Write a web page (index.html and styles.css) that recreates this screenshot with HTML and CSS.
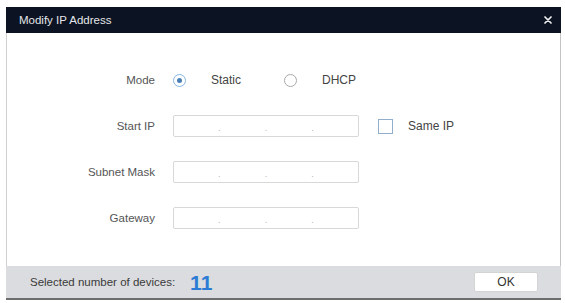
FILE: index.html
```
<!DOCTYPE html>
<html>
<head>
<meta charset="utf-8">
<link rel="stylesheet" href="styles.css">
</head>
<body>
<div class="dialog">
  <div class="titlebar">
    <span class="title">Modify IP Address</span>
    <svg class="close" width="8" height="8" viewBox="0 0 8 8"><path d="M1 1L7 7M7 1L1 7" stroke="#f0f0f0" stroke-width="1.7" stroke-linecap="round"/></svg>
  </div>
  <div class="content">
    <div class="form">
      <div class="label">Mode</div>
      <div class="ctrl">
        <span class="option"><span class="radio checked"></span><span class="opt-text">Static</span></span>
        <span class="option"><span class="radio"></span><span class="opt-text">DHCP</span></span>
      </div>
      <div class="label">Start IP</div>
      <div class="ctrl">
        <div class="ip"><span class="seg"></span><span class="dot">.</span><span class="seg"></span><span class="dot">.</span><span class="seg"></span><span class="dot">.</span><span class="seg"></span></div>
        <span class="check"></span><span class="opt-text same">Same IP</span>
      </div>
      <div class="label">Subnet Mask</div>
      <div class="ctrl">
        <div class="ip"><span class="seg"></span><span class="dot">.</span><span class="seg"></span><span class="dot">.</span><span class="seg"></span><span class="dot">.</span><span class="seg"></span></div>
      </div>
      <div class="label">Gateway</div>
      <div class="ctrl">
        <div class="ip"><span class="seg"></span><span class="dot">.</span><span class="seg"></span><span class="dot">.</span><span class="seg"></span><span class="dot">.</span><span class="seg"></span></div>
      </div>
    </div>
  </div>
  <div class="footer">
    <span class="count-label">Selected number of devices:</span>
    <span class="count">11</span>
    <button class="ok">OK</button>
  </div>
</div>
</body>
</html>
```

FILE: styles.css
```
html, body {
  margin: 0;
  padding: 0;
  background: #ffffff;
}
body {
  padding: 7px 0 0 6px;
  font-family: "Liberation Sans", Arial, sans-serif;
}
.dialog {
  width: 555px;
  box-sizing: border-box;
  border-left: 1px solid #d0d0d0;
  border-right: 1px solid #c4c4c4;
  background: #ffffff;
}
.titlebar {
  height: 26px;
  background: #0c1322;
  display: flex;
  align-items: center;
  justify-content: space-between;
  padding: 0 9px 0 13px;
  margin: 0 -1px;
}
.title {
  color: #e4e6ea;
  font-size: 11.5px;
}
.close {
  display: block;
}
.content {
  padding: 36px 0 37px 0;
}
.form {
  display: grid;
  grid-template-columns: 148px auto;
  grid-auto-rows: 22px;
  column-gap: 18px;
  row-gap: 24px;
}
.label {
  text-align: right;
  font-size: 11.5px;
  color: #555555;
  align-self: center;
}
.ctrl {
  display: flex;
  align-items: center;
}
.option {
  display: flex;
  align-items: center;
  gap: 25px;
  margin-right: 43px;
}
.radio {
  width: 13px;
  height: 13px;
  box-sizing: border-box;
  border-radius: 50%;
  border: 1px solid #a9a9a9;
  display: flex;
  align-items: center;
  justify-content: center;
}
.radio.checked {
  border-color: #86b6e4;
}
.radio.checked::after {
  content: "";
  width: 5px;
  height: 5px;
  border-radius: 50%;
  background: #4a7fb5;
}
.opt-text {
  font-size: 12px;
  color: #444444;
}
.ip {
  width: 186px;
  height: 22px;
  box-sizing: border-box;
  border: 1px solid #d8d8d8;
  border-radius: 2px;
  display: flex;
  align-items: center;
}
.seg {
  flex: 1;
}
.dot {
  font-size: 9px;
  color: #b0b0b0;
  line-height: 1;
  padding-top: 4px;
}
.check {
  width: 15px;
  height: 15px;
  box-sizing: border-box;
  border: 1px solid #93aecb;
  margin-left: 19px;
  margin-right: 15px;
}
.footer {
  height: 34px;
  box-sizing: border-box;
  background: #dadcdf;
  border-bottom: 2px solid #6e6e6e;
  display: flex;
  align-items: center;
  padding: 0 23px 0 24px;
  margin: 0 -1px;
}
.count-label {
  font-size: 11.5px;
  color: #3a3a3a;
}
.count {
  font-size: 21px;
  font-weight: bold;
  color: #2c7bd4;
  margin-left: 15px;
  margin-top: 1px;
}
.ok {
  margin-left: auto;
  width: 64px;
  height: 20px;
  background: #ffffff;
  border: 1px solid #d4d4d4;
  border-radius: 2px;
  font-family: "Liberation Sans", Arial, sans-serif;
  font-size: 12px;
  color: #333333;
  padding: 0;
}
```
